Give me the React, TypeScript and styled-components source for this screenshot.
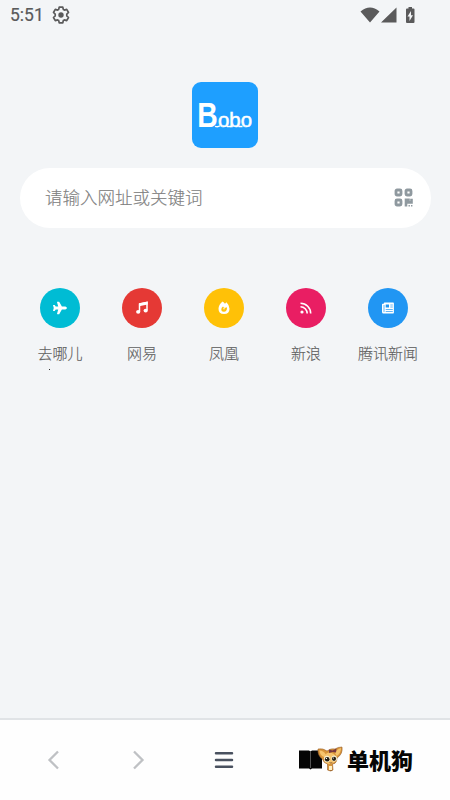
import React from "react";
import styled, { createGlobalStyle } from "styled-components";
import { FaPlane } from "react-icons/fa";

const GlobalStyle = createGlobalStyle`
  * { box-sizing: border-box; }
  body { margin: 0; background: #f3f5f7; }
`;

const Screen = styled.div`
  width: 450px;
  height: 800px;
  display: flex;
  flex-direction: column;
  overflow: hidden;
  background: #f3f5f7;
  font-family: "Noto Sans CJK SC", sans-serif;
  svg { display: block; flex: none; }
`;

const StatusBar = styled.header`
  height: 30px;
  padding: 0 34px 0 10px;
  display: flex;
  align-items: center;
  color: #5a5a5b;
`;

const Clock = styled.span`
  width: 42px;
  font: 400 17.5px/30px Roboto, sans-serif;
  -webkit-text-stroke: 0.2px #5a5a5b;
`;

const StatusIcons = styled.div`
  margin-left: auto;
  display: flex;
  align-items: center;
`;

const Home = styled.main`
  flex: 1;
  display: flex;
  flex-direction: column;
  align-items: center;
  padding-top: 52px;
`;

const Logo = styled.div`
  width: 66px;
  height: 66px;
  border-radius: 9px;
  background: #1e9fff;
`;

const SearchBar = styled.div`
  width: 411px;
  height: 60px;
  margin: 20px 0 0 1px;
  padding: 0 18px 2px 25px;
  border-radius: 30px;
  background: #fff;
  display: flex;
  align-items: center;
  justify-content: space-between;
`;

const Placeholder = styled.span`
  font-size: 17.5px;
  line-height: 26px;
  font-weight: 300;
  color: #808080;
  -webkit-text-stroke: 0.15px #808080;
`;

const Shortcuts = styled.div`
  width: 410px;
  margin: 60px 0 0 -2px;
  display: grid;
  grid-template-columns: repeat(5, 82px);
`;

const Shortcut = styled.div`
  display: flex;
  flex-direction: column;
  align-items: center;
  gap: 14px;
`;

const Disc = styled.div<{ $color: string }>`
  width: 40px;
  height: 40px;
  border-radius: 50%;
  background: ${(p) => p.$color};
  color: #fff;
  display: flex;
  align-items: center;
  justify-content: center;
`;

const Label = styled.span`
  font-size: 15px;
  line-height: 22px;
  font-weight: 300;
  color: #5f5f5f;
  -webkit-text-stroke: 0.15px #5f5f5f;
  white-space: nowrap;
`;

const Dot = styled.i`
  width: 1px;
  height: 1px;
  margin: 5px 0 0 -351px;
  background: #333;
`;

const NavBar = styled.nav`
  height: 82px;
  border-top: 2px solid #e0e3e6;
  background: #fefefe;
  display: grid;
  grid-template-columns: 11px 85px 83px 90px 1fr;
  align-items: center;
  justify-items: center;
`;

const Brand = styled.div`
  width: 100%;
  padding-left: 30px;
  display: flex;
  align-items: center;
`;

const BrandName = styled.span`
  font-size: 22px;
  line-height: 30px;
  font-weight: 900;
  color: #050505;
  margin: -3px 0 0 4px;
`;

const Gear = () => (
  <svg width="18" height="18" viewBox="0 0 18 18" fill="none" stroke="currentColor">
    <path d="M7.2 1.2h3.6l.5 2.2 1.2.7 2.2-.7 1.8 3.1-1.7 1.6v1.8l1.7 1.6-1.8 3.1-2.2-.7-1.2.7-.5 2.2H7.2l-.5-2.2-1.2-.7-2.2.7-1.8-3.1 1.7-1.6V8.1L1.5 6.500l1.800-3.100 2.200.700 1.200-.700z" strokeWidth="1.7" strokeLinejoin="round" />
    <circle cx="9" cy="9" r="2.7" fill="currentColor" stroke="none" />
  </svg>
);

const Signals = () => (
  <svg width="56" height="20" viewBox="0 0 56 20" fill="currentColor">
    <path d="M.500 6.500Q10-1.500 19.500 6.500L10 17.500zM36.500 2.500V17.500H21z" />
    <path d="M47 3.500h1.500V2h3.500v1.500h1.500q1 0 1 1V17q0 1-1 1H47q-1 0-1-1V4.500q0-1 1-1z" />
    <path fill="#f3f5f7" d="M51 6l-3.500 5.500h2V16l3.500-5.700h-2z" />
  </svg>
);

const LogoMark = () => (
  <svg width="66" height="66" viewBox="0 0 66 66" fill="#fff" fontFamily="Liberation Sans, sans-serif">
    <text x="5.300" y="45" fontWeight="700" fontSize="34.500" textLength="20.500" lengthAdjust="spacingAndGlyphs">B</text>
    <text x="26" y="45" fontSize="20" textLength="34" lengthAdjust="spacingAndGlyphs" stroke="#fff" strokeWidth=".5">obo</text>
    <path fill="none" stroke="#fff" strokeWidth="1.400" d="M23 44.300q3 1 5-.500M35 44.500h4M46.500 44.500h4" />
  </svg>
);

const QrIcon = () => (
  <svg width="19" height="19" viewBox="0 0 19 19" fill="none" stroke="#8f999f" strokeWidth="2.800">
    <rect x="2" y="2" width="5" height="5" rx="1" />
    <rect x="12" y="2" width="5" height="5" rx="1" />
    <rect x="2" y="12" width="5" height="5" rx="1" />
    <path d="M12 18.500v-6.600h2.500v2.500h3v-3.600" strokeWidth="2.600" />
    <path d="M14.500 17.700h1.400M17 17.700h1.400" strokeWidth="1.400" />
  </svg>
);

const MusicIcon = () => (
  <svg width="14" height="14" viewBox="0 0 14 14">
    <path d="M4.500 10.500V3L12 1.500V9" fill="none" stroke="#fff" strokeWidth="1.500" />
    <path d="M4 2.300L12.700.600V3.500L4 5.200z" fill="#fff" />
    <ellipse cx="3.200" cy="10.800" rx="2.100" ry="1.900" fill="#fff" />
    <ellipse cx="10.700" cy="9.600" rx="2.100" ry="1.900" fill="#fff" />
  </svg>
);

const FlameIcon = () => (
  <svg width="12" height="14" viewBox="0 0 12 14">
    <path fill="#fff" d="M4.500.500Q6 1.300 7 2.800L8.400 1.200Q11.500 4 11.500 7.800 11.500 13 6 13 .500 13 .500 7.800.500 4 4.500.500z" />
    <path fill="#ffc107" d="M5 5.500l1.700 1.700L8.500 6q1 2 0 3.300-1 1.500-2.600 1.500-2.600 0-2.600-2.500Q3.300 6.600 5 5.500z" />
    <circle cx="6" cy="7.500" r="1" fill="#ffe79a" />
  </svg>
);

const FeedIcon = () => (
  <svg width="12" height="12" viewBox="0 0 12 12" fill="none" stroke="#fff" strokeWidth="1.600">
    <circle cx="2" cy="10" r="1.600" fill="#fff" stroke="none" />
    <path d="M.500 4.800A6.700 6.700 0 0 1 7.200 11.500M.500 1.300A10.200 10.200 0 0 1 10.700 11.500" />
  </svg>
);

const NewsIcon = () => (
  <svg width="14" height="12" viewBox="0 0 14 12">
    <path fill="#fff" d="M3.500.500h8.700q.7 0 .7.700v9.600q0 .7-.7.700H2.600q-1.600 0-1.600-1.600V2.500q0-.7.700-.7h1.100v-.6q0-.7.700-.7z" />
    <path fill="none" stroke="#2196f3" d="M3 3v7M9.300 3h2.500M9.300 5h2.500M4.700 7.500h7.100M4.700 9.500h7.100" strokeWidth=".7" />
    <path fill="#2196f3" d="M4.700 2.500H8v3H4.700z" />
  </svg>
);

const Chevron = ({ right = false }: { right?: boolean }) => (
  <svg width="20" height="20" viewBox="0 0 20 20" fill="none" stroke="#bfc1c4" strokeWidth="2.300">
    <path d={right ? "M6 1.500l8.500 8.500L6 18.500" : "M14 1.500L5.500 10l8.500 8.500"} />
  </svg>
);

const MenuIcon = () => (
  <svg width="20" height="18" viewBox="0 0 20 18" stroke="#49515f" strokeWidth="2.500" strokeLinecap="round">
    <path d="M2 2.300h16M2 9h16M2 15.700h16" />
  </svg>
);

const PuppyMark = () => (
  <svg width="44" height="28" viewBox="0 0 44 28">
    <path fill="#050505" d="M0 4.500h10l1.500 1L13 4.500h10v18H13l-1.500 1-1.500-1H0z" />
    <path stroke="#777" strokeWidth=".7" d="M11.500 6v16" />
    <path fill="#d89439" stroke="#99602d" strokeWidth=".6" d="M19 3q5-1 9 2 4-3 8-2 3-2 7-2 1 7-5 11l-.5 3q-1 3-4 3l.5 6q-2 2-5.500 0v-6q-4-1-5-5-5-3-4.500-10z" />
    <path fill="#f6c46d" d="M20.500 4.500q4 0 6 3.500l-2 3q-3.500-2-4-6.500zM42 2q-4 1-6 5l1.700 3Q42 7 42 2zM25 10q4-6 10-2l3 5q-3 5-8 5-6-1-5-8z" />
    <path fill="#783740" d="M30 3.500l3.500 1 4-2-.500 4-3.500-.500-3.500 1z" />
    <ellipse cx="28" cy="13" rx="3" ry="3.200" fill="#f7edcf" />
    <ellipse cx="35.200" cy="12.500" rx="2.800" ry="3" fill="#f7edcf" />
    <circle cx="28.200" cy="13.200" r="2.300" fill="#252015" />
    <circle cx="35" cy="12.800" r="2.100" fill="#252015" />
    <circle cx="27.500" cy="12.400" r=".6" fill="#fff" />
    <circle cx="34.400" cy="12" r=".6" fill="#fff" />
    <path stroke="#714323" strokeWidth=".7" fill="none" d="M30.500 16.500q1.300 1 2.800 0M32 20v5" />
    <path fill="#fff0c5" d="M30 20h3v4h-3z" />
  </svg>
);

const shortcuts = [
  { label: "去哪儿", color: "#00bcd4", icon: <FaPlane size={14} /> },
  { label: "网易", color: "#e53935", icon: <MusicIcon /> },
  { label: "凤凰", color: "#ffc107", icon: <FlameIcon /> },
  { label: "新浪", color: "#e91e63", icon: <FeedIcon /> },
  { label: "腾讯新闻", color: "#2196f3", icon: <NewsIcon /> },
];

export default function App() {
  return (
    <Screen>
      <GlobalStyle />
      <StatusBar>
        <Clock>5:51</Clock>
        <Gear />
        <StatusIcons><Signals /></StatusIcons>
      </StatusBar>
      <Home>
        <Logo><LogoMark /></Logo>
        <SearchBar>
          <Placeholder>请输入网址或关键词</Placeholder>
          <QrIcon />
        </SearchBar>
        <Shortcuts>
          {shortcuts.map((s) => (
            <Shortcut key={s.label}>
              <Disc $color={s.color}>{s.icon}</Disc>
              <Label>{s.label}</Label>
            </Shortcut>
          ))}
        </Shortcuts>
        <Dot />
      </Home>
      <NavBar>
        <span />
        <Chevron />
        <Chevron right />
        <MenuIcon />
        <Brand>
          <PuppyMark />
          <BrandName>单机狗</BrandName>
        </Brand>
      </NavBar>
    </Screen>
  );
}
